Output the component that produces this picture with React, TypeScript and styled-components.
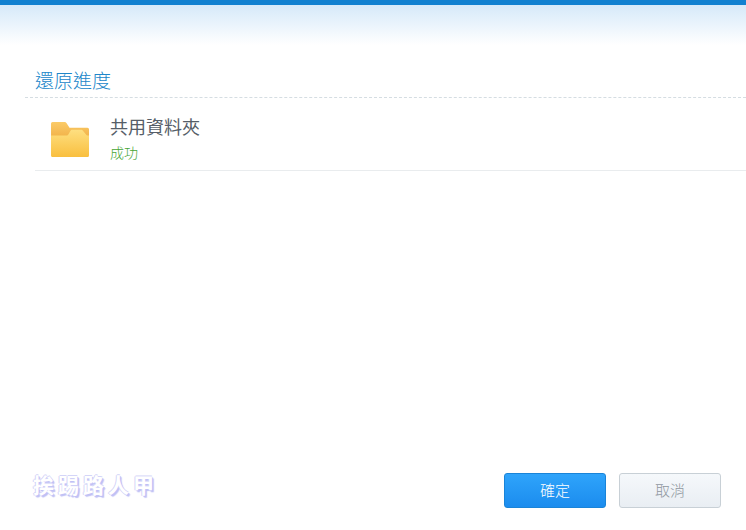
import React from "react";
import styled, { createGlobalStyle } from "styled-components";

const cjk = `"Noto Sans CJK TC", "Liberation Sans", sans-serif`;

const GlobalStyle = createGlobalStyle`
  html, body {
    margin: 0;
    padding: 0;
    background: #fff;
  }
`;

const Page = styled.div`
  width: 746px;
  height: 530px;
  display: flex;
  flex-direction: column;
  overflow: hidden;
  font-family: ${cjk};
`;

const TopBar = styled.div`
  height: 45px;
  flex: none;
  box-sizing: border-box;
  border-top: 5px solid #1180d0;
  background: linear-gradient(#d6e9f9, #ffffff);
`;

const Content = styled.div`
  flex: 1;
  padding: 0 0 0 35px;
  display: flex;
  flex-direction: column;
`;

const Title = styled.div`
  margin: 22px 0 0 -10px;
  padding-left: 10px;
  height: 30px;
  line-height: 25px;
  font-size: 19px;
  font-weight: 300;
  color: #2086c9;
  border-bottom: 1px dashed #d5dde2;
`;

const Row = styled.div`
  height: 72px;
  display: flex;
  align-items: center;
  border-bottom: 1px solid #e9ecee;
`;

const IconBox = styled.div`
  width: 75px;
  margin-top: 10px;
  padding-left: 15px;
  box-sizing: border-box;
  display: flex;
  flex: none;
`;

const RowText = styled.div`
  display: flex;
  flex-direction: column;
  gap: 5px;
  margin-top: 6px;
`;

const RowName = styled.div`
  font-size: 18px;
  line-height: 24px;
  color: #565e68;
`;

const RowStatus = styled.div`
  font-size: 14px;
  line-height: 18px;
  font-weight: 300;
  color: #46a534;
`;

const Footer = styled.div`
  height: 57px;
  flex: none;
  display: flex;
  align-items: flex-start;
  justify-content: space-between;
  padding: 0 25px 0 33px;
`;

const Watermark = styled.div`
  margin-top: -3px;
  font-weight: 700;
  font-size: 21px;
  line-height: 28px;
  letter-spacing: 4px;
  color: #ffffff;
  text-shadow: -1px 0 0 #d4d5f8, 0 -1px 0 #d4d5f8, 1px 1px 0 #c0c1f5, 2px 2px 1px #c0c1f5;
`;

const Buttons = styled.div`
  display: flex;
  gap: 13px;
`;

const Button = styled.div<{ $primary?: boolean }>`
  width: 102px;
  height: 35px;
  padding-bottom: 2px;
  box-sizing: border-box;
  border-radius: 3px;
  display: flex;
  align-items: center;
  justify-content: center;
  font-size: 15px;
  font-weight: 300;
  border: 1px solid ${(p) => (p.$primary ? "#1a84d8" : "#c8d0d6")};
  color: ${(p) => (p.$primary ? "#ffffff" : "#8f979f")};
  background: ${(p) =>
    p.$primary
      ? "linear-gradient(#2fa4fb, #1b8cee)"
      : "linear-gradient(#f5f8fb, #e9eef3)"};
`;

const FolderIcon = () => (
  <svg width="39" height="37" viewBox="0 0 38 36">
    <defs>
      <linearGradient id="back" x1="0" y1="0" x2="0" y2="1">
        <stop offset="0" stopColor="#fbcb68" />
        <stop offset="1" stopColor="#f0ae44" />
      </linearGradient>
      <linearGradient id="front" x1="0" y1="0" x2="0" y2="1">
        <stop offset="0" stopColor="#fedf80" />
        <stop offset="1" stopColor="#f9bf3f" />
      </linearGradient>
    </defs>
    <path
      d="M1 2.500A1.500 1.500 0 0 1 2.500 1h11.500c1 0 1.600.4 2.200 1.200L19 6.500h17.500A1.500 1.500 0 0 1 38 8v10H1z"
      fill="url(#back)"
    />
    <path
      d="M1 14h15c1 0 1.500-.4 2-1.200l1.800-3c.5-.8 1-1.300 2-1.300h8.400c1 0 1.600.4 2.100 1.200L34.500 12.500c.5.8 1 1.500 2 1.500H38v19.500a1.500 1.500 0 0 1-1.500 1.500h-34A1.500 1.500 0 0 1 1 33.500z"
      fill="url(#front)"
    />
  </svg>
);

export default function App() {
  return (
    <Page>
      <GlobalStyle />
      <TopBar />
      <Content>
        <Title>還原進度</Title>
        <Row>
          <IconBox>
            <FolderIcon />
          </IconBox>
          <RowText>
            <RowName>共用資料夾</RowName>
            <RowStatus>成功</RowStatus>
          </RowText>
        </Row>
      </Content>
      <Footer>
        <Watermark>挨踢路人甲</Watermark>
        <Buttons>
          <Button $primary>確定</Button>
          <Button>取消</Button>
        </Buttons>
      </Footer>
    </Page>
  );
}
